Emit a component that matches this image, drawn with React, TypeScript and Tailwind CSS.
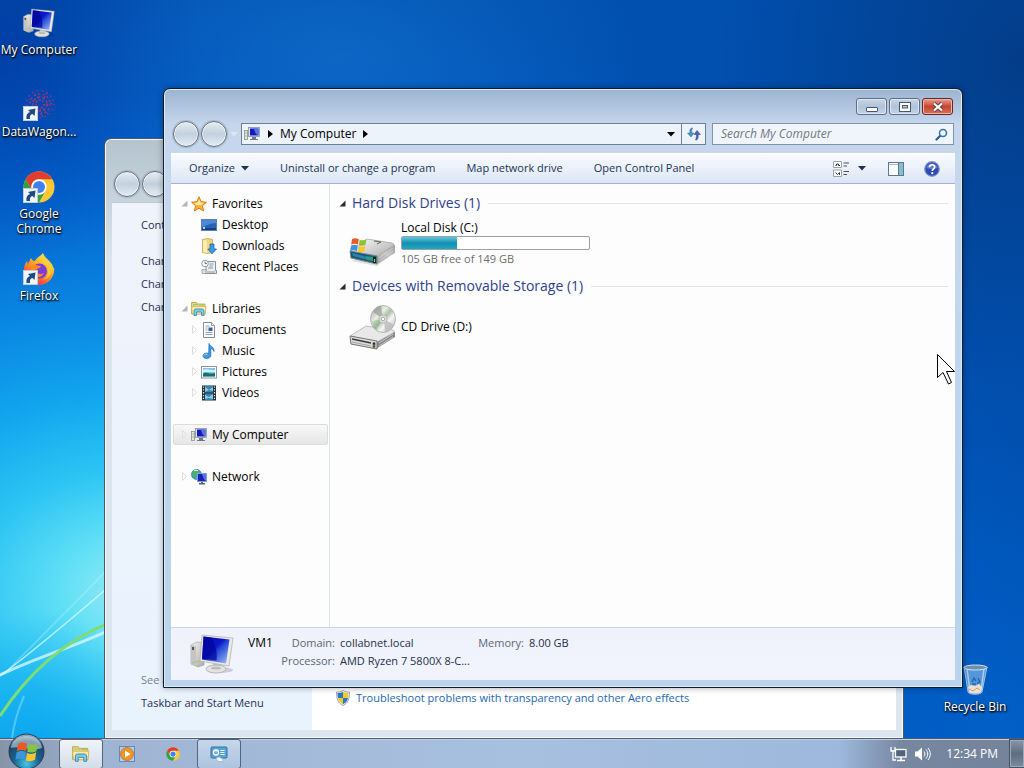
import type { ReactNode } from 'react';

function MonitorIcon({ className }: { className?: string }) {
  return (
    <svg viewBox="0 0 44 40" className={className} aria-hidden="true">
      <defs>
        <linearGradient id="screen" x1="0" y1="0" x2="1" y2="1">
          <stop offset="0" stopColor="#0508b8" />
          <stop offset="0.45" stopColor="#0d18c8" />
          <stop offset="0.55" stopColor="#2546d8" />
          <stop offset="1" stopColor="#a9c6fa" />
        </linearGradient>
        <linearGradient id="metal" x1="0" y1="0" x2="1" y2="1">
          <stop offset="0" stopColor="#f6f6f4" />
          <stop offset="1" stopColor="#aaaaa8" />
        </linearGradient>
      </defs>
      <ellipse cx="30" cy="36" rx="13" ry="3" fill="#000" opacity="0.15" />
      <path d="M1 11 7 8 14 9v22l-6 2-7-3z" fill="url(#metal)" stroke="#a5a5a0" strokeWidth="0.7" />
      <path d="M1 11l5 1v20l-5-2z" fill="#c4c4c0" />
      <path d="M3 13v3" stroke="#333" strokeWidth="1.5" />
      <path d="M2 29l11-3" stroke="#b9bd85" />
      <path d="M23 28l8 1 1 6h-9z" fill="#c5c5c2" />
      <ellipse cx="26" cy="35" rx="10" ry="4" fill="#e3e3df" stroke="#aaa" strokeWidth="0.8" />
      <ellipse cx="26" cy="34" rx="5" ry="1.6" fill="#bcbcb8" />
      <path d="M12 1l31 3-4 28-29-5z" fill="#eceae6" stroke="#b4b4ae" strokeWidth="0.8" />
      <path d="M13.500 2.500l26 3-3.500 24-24-4z" fill="url(#screen)" />
      <path d="M13.500 2.500l8 1c4 7 6 15 5 23l-14.500-2z" fill="#000598" opacity="0.7" />
    </svg>
  );
}

function SmallComputer({ className = 'h-4 w-4 shrink-0' }: { className?: string }) {
  return (
    <svg viewBox="0 0 16 16" className={className} aria-hidden="true">
      <rect x="0.5" y="4.5" width="3" height="9" fill="#e4e8dc" stroke="#85928b" strokeWidth="0.8" />
      <path d="M1.5 7h1M1.5 10h1" stroke="#54a05c" />
      <rect x="4.5" y="1.5" width="11" height="9" fill="#dfe3f2" stroke="#8890a8" strokeWidth="0.8" />
      <rect x="6" y="2.5" width="8.5" height="7" fill="#1717bb" />
      <path d="M10 2.5h4.5v7c-3-1-4-4-4.500-7z" fill="#5772e2" />
      <path d="M8 11h4v2h2v1H6v-1h2z" fill="#727787" />
    </svg>
  );
}

function StarIcon() {
  return (
    <svg viewBox="0 0 16 16" className="h-4 w-4 shrink-0" aria-hidden="true">
      <path d="M8 .8l2.100 4.900 5.300.5-4 3.500 1.200 5.300L8 12.200 3.400 15l1.200-5.300-4-3.500 5.300-.5z" fill="#fdb436" stroke="#d77a1b" />
      <path d="M8 3l1.400 3.500 3.500.4L10 9H5L3.200 6.900l3.400-.4z" fill="#ffe79c" />
    </svg>
  );
}

function DesktopIcon() {
  return (
    <svg viewBox="0 0 16 16" className="h-4 w-4 shrink-0" aria-hidden="true">
      <rect x="0.5" y="2.500" width="15" height="11" fill="#2962b8" stroke="#5e7fa8" />
      <path d="M1 3h14v3C9 6 5 9 1 10z" fill="#4d89d9" />
      <path d="M1 11h14v2H1z" fill="#183f7c" />
      <path d="M2 10h2v2H2z" fill="#b7d7f5" />
    </svg>
  );
}

function DownloadsIcon() {
  return (
    <svg viewBox="0 0 16 16" className="h-4 w-4 shrink-0" aria-hidden="true">
      <path d="M1.500 1.500l5-1 5 1v13l-5 1-5-1z" fill="#f3d67a" stroke="#c9a34a" strokeWidth="0.8" />
      <path d="M6 2.500v12.500l-4-1v-12z" fill="#fbeeb4" />
      <path d="M9 6h4v5h2.500L11 15.800 6.800 11H9z" fill="#3d9ae4" stroke="#1766ae" strokeWidth="0.8" />
    </svg>
  );
}

function RecentIcon() {
  return (
    <svg viewBox="0 0 16 16" className="h-4 w-4 shrink-0" aria-hidden="true">
      <path d="M5 2.500h9.500v9h1v3H4v-2h1z" fill="#eceff1" stroke="#7d878d" strokeWidth="0.9" />
      <path d="M8.500 5h4M8.500 7h3M7 9h5M6 13h8" stroke="#8c979d" />
      <circle cx="4" cy="4.500" r="3.300" fill="#f7f9fa" stroke="#87939b" strokeWidth="0.9" />
      <path d="M4 2.500v2h2" stroke="#55616a" fill="none" strokeWidth="0.8" />
      <path d="M1 10.500h4v4H1z" fill="#dce1e4" stroke="#8b949a" strokeWidth="0.7" />
    </svg>
  );
}

function LibraryIcon({ className = 'h-4 w-4 shrink-0' }: { className?: string }) {
  return (
    <svg viewBox="0 0 16 16" className={className} aria-hidden="true">
      <path d="M.5 1.500h5l1 1.500h7.500v10H.5z" fill="#eed675" stroke="#bda04a" strokeWidth="0.8" />
      <path d="M2 3.500h5M8 4h5" stroke="#8fc78b" />
      <path d="M.5 5.500h14.500l-.8 7.500H1.300z" fill="#faedaa" stroke="#cfb45c" strokeWidth="0.8" />
      <path d="M3 14.500V9.800C3 8.600 4 8 5 8h6c1 0 2 .6 2 1.800v4.700h-2.500v-3.500h-5v3.500z" fill="#7fcbe8" stroke="#3585ad" strokeWidth="0.8" />
    </svg>
  );
}

function DocumentIcon() {
  return (
    <svg viewBox="0 0 16 16" className="h-4 w-4 shrink-0" aria-hidden="true">
      <path d="M2.500.5h8l3 3v12h-11z" fill="#fff" stroke="#7f8b99" />
      <path d="M10.500.5v3h3" fill="#dfe6ec" stroke="#7f8b99" strokeWidth="0.8" />
      <path d="M4.500 4h4M4.500 6h2M4.500 8h2M4.500 10.500h7M4.500 12.500h7" stroke="#8c9bb0" />
      <path d="M7.500 5.500h4V9h-4z" fill="#315f9f" />
    </svg>
  );
}

function MusicIcon() {
  return (
    <svg viewBox="0 0 16 16" className="h-4 w-4 shrink-0" aria-hidden="true">
      <path d="M8 .5c.5 3 5.500 3 5 8-.8-2-2-2.800-3.200-3v7.200c0 1.600-2 2.800-4.200 2.800S2 14.300 2 12.800s1.600-2.700 3.600-2.700c.8 0 1.500.1 2.100.4z" fill="#3b9be2" stroke="#1b66ae" strokeWidth="0.7" />
      <path d="M3 12.500c.5-1.300 2-1.600 3.500-1.200" stroke="#b9e3fb" fill="none" />
    </svg>
  );
}

function PictureIcon() {
  return (
    <svg viewBox="0 0 16 16" className="h-4 w-4 shrink-0" aria-hidden="true">
      <rect x="0.500" y="2.500" width="15" height="11.500" fill="#fff" stroke="#8798a5" />
      <path d="M2 4h12v8.500H2z" fill="#7fc7e9" />
      <path d="M2 6c4-2 8 1 12 0v2H2z" fill="#d7f1f8" />
      <path d="M2 10c3-3 6 1 12-1v3.500H2z" fill="#15706f" />
    </svg>
  );
}

function VideoIcon() {
  return (
    <svg viewBox="0 0 16 16" className="h-4 w-4 shrink-0" aria-hidden="true">
      <rect x="1" y="0.500" width="14" height="15" fill="#222c35" />
      <path d="M4 1h8v6.500H4zM4 8.500h8V15H4z" fill="#3a83ad" />
      <path d="M4 2l4 3 4-3v4L8 5 4 7zM4 10l4 2 4-3v5l-4-1-4 1z" fill="#8acbe5" />
      <path d="M2.500 1.500v14M13.500 1.500v14" stroke="#e7edf0" strokeWidth="1.200" strokeDasharray="1.300 1.500" />
    </svg>
  );
}

function NetworkIcon() {
  return (
    <svg viewBox="0 0 16 16" className="h-4 w-4 shrink-0" aria-hidden="true">
      <circle cx="5.500" cy="5.500" r="5" fill="#3ba3d5" stroke="#2678a0" strokeWidth="0.7" />
      <path d="M2 3c2-3 6-2 6 0S6 5 5 6s1 3-1 3-3-3-2-6z" fill="#48b263" />
      <path d="M3 2c1-1 3-1 4 0" stroke="#e9fbef" fill="none" />
      <rect x="6.500" y="4.500" width="9" height="8" fill="#1a1fbd" stroke="#8ba0cc" />
      <path d="M11 5h4v7c-2-1-3-4-4-7z" fill="#5474e4" />
      <path d="M10 13h2v1h2v1.500H8V14h2z" fill="#596072" />
    </svg>
  );
}

function Flag() {
  return (
    <g>
      <path d="M0 1.500C3 0 5 0 8 1.500L7 8C4.500 6.500 2 6.500-1 8z" fill="#ea5a25" />
      <path d="M9 2c3 1 5 1 8-.5L16 8c-3 1.500-5 1.500-8 .5z" fill="#88c53d" />
      <path d="M-1.200 9c3-1.500 5.500-1.500 8 0l-1 6.500c-2.500-1.500-5-1.500-8 0z" fill="#3d96dd" />
      <path d="M7.800 9.500c3 1.200 5 1.200 8-.5l-1 6.500c-3 1.500-5 1.500-8 .5z" fill="#fbc62c" />
    </g>
  );
}

function HardDriveIcon() {
  return (
    <svg viewBox="0 0 48 48" className="h-12 w-12 shrink-0" aria-hidden="true">
      <defs>
        <linearGradient id="hddTop" x1="0" y1="0" x2="1" y2="0.800">
          <stop offset="0" stopColor="#fff" />
          <stop offset="1" stopColor="#b4b4b4" />
        </linearGradient>
        <linearGradient id="hddSide" x1="0" y1="1" x2="1" y2="0">
          <stop offset="0" stopColor="#6e6e6e" />
          <stop offset="0.600" stopColor="#c4c4c4" />
          <stop offset="1" stopColor="#8b8b8b" />
        </linearGradient>
      </defs>
      <path d="M3 41l26 5 17-13v-6z" fill="#000" opacity="0.12" />
      <path d="M2 32l17-13 25 4c2 .5 3 2 3 4v6L29 44 3 38z" fill="url(#hddSide)" />
      <path d="M2 31l17-12 25 4c2 1 2 2 1 3L29 36z" fill="url(#hddTop)" stroke="#aaa" strokeWidth="0.7" />
      <path d="M2 31l27 5v8L3 38z" fill="#17567a" stroke="#7c8588" />
      <path d="M4 33l12 3 4 4-15-4z" fill="#2a86a8" />
      <path d="M17 36l8 1v4l-6-1z" fill="#2e9a80" />
      <path d="M31 38l14-10M31 41l14-10" stroke="#dadada" opacity="0.700" />
      <path d="M26.500 37v6" stroke="#122" strokeWidth="3" />
      <path d="M26.500 39v3" stroke="#6fe63c" strokeWidth="1.300" />
      <path d="M26 21l7 1-4 2" stroke="#666" fill="none" />
      <g transform="translate(4 18) scale(.85)">
        <Flag />
      </g>
    </svg>
  );
}

function CdDriveIcon() {
  return (
    <svg viewBox="0 0 48 48" className="h-12 w-12 shrink-0" aria-hidden="true">
      <defs>
        <linearGradient id="disc" x1="0" y1="0" x2="1" y2="1">
          <stop offset="0" stopColor="#9c9c9c" />
          <stop offset="0.35" stopColor="#e9efe4" />
          <stop offset="0.5" stopColor="#a9bfa4" />
          <stop offset="0.65" stopColor="#f7f7f7" />
          <stop offset="1" stopColor="#a2a2a2" />
        </linearGradient>
      </defs>
      <path d="M2 34l16-10 26 3c2 .5 3 2 3 3v4L28 46 3 41z" fill="#8b8b8b" />
      <path d="M2 33l16-10 27 4c2 1 1 2 0 3L29 39z" fill="#e8e8e8" stroke="#aaa" strokeWidth="0.7" />
      <path d="M2 33l27 5v8L3 41z" fill="#dcdcdc" stroke="#777" />
      <path d="M4 36l19 4" stroke="#383838" strokeWidth="1.500" />
      <path d="M4 39l19 4" stroke="#a3a3a3" />
      <path d="M31 40l14-9M31 43l14-9" stroke="#c5c5c5" />
      <path d="M26 39.500v5" stroke="#222" strokeWidth="2.500" />
      <path d="M26 41.500v2" stroke="#a5dc39" />
      <ellipse cx="35" cy="16" rx="12.500" ry="13.500" fill="url(#disc)" stroke="#aaa" strokeWidth="0.8" />
      <path d="M35 16L25 9c2-4 5-6 8-6z" fill="#8e978e" opacity="0.65" />
      <path d="M36 16l10 6c-2 4-5 7-9 7z" fill="#bcbcbc" opacity="0.8" />
      <path d="M35 16L24 18c0 4 2 7 4 9z" fill="#7fb07c" opacity="0.4" />
      <circle cx="35" cy="16" r="4" fill="#e3e3e3" stroke="#aaa" strokeWidth="0.7" />
      <circle cx="35" cy="16" r="1.800" fill="#fff" stroke="#888" strokeWidth="0.7" />
    </svg>
  );
}

function ChromeIcon({ className }: { className?: string }) {
  return (
    <svg viewBox="0 0 32 32" className={className} aria-hidden="true">
      <circle cx="16" cy="16" r="15.500" fill="#fcc934" />
      <path d="M2.600 8.200A15.500 15.500 0 0 1 29.400 8.300H16a7.700 7.700 0 0 0-6.700 11.600z" fill="#e33b2e" />
      <path d="M2.600 8.200a15.500 15.500 0 0 0 13.300 23.300l6.800-11.700a7.700 7.700 0 0 1-13.400 0z" fill="#2da14c" />
      <circle cx="16" cy="16" r="7.700" fill="#fff" />
      <circle cx="16" cy="16" r="6" fill="#3f82ee" />
    </svg>
  );
}

function FirefoxIcon() {
  return (
    <svg viewBox="0 0 32 32" className="h-8 w-8" aria-hidden="true">
      <defs>
        <linearGradient id="flame" x1="0.800" y1="0" x2="0.200" y2="1">
          <stop offset="0" stopColor="#fff44f" />
          <stop offset="0.400" stopColor="#ffae27" />
          <stop offset="0.750" stopColor="#ff5a36" />
          <stop offset="1" stopColor="#e31587" />
        </linearGradient>
      </defs>
      <path d="M20 0c1 4 5 6 8 10 1.300 1.500 2 3 2.200 4.500l1 .5c.8 9-6 17-15 17S1 25 1 17c0-4 1-7 3-9l1 3 3-6c1 2 2 3 4 3 2-4 5-4 8-8z" fill="url(#flame)" />
      <circle cx="16.500" cy="18" r="7.500" fill="#7a3bd8" />
      <path d="M9 12c4-1 6 1 9 1-1 3-5 2-5 5 1 3 5 4 8 2-2 5-9 6-12 1-1.500-3-1.500-6 0-9z" fill="#ff8a1e" />
      <path d="M18 5c1 5 7 7 7 14 0 4-3 7-6 8 7-1 11-6 10-12C28 10 21 8 20 1z" fill="#ffcf3a" opacity="0.850" />
    </svg>
  );
}

function SwirlIcon() {
  return (
    <svg viewBox="0 0 32 32" className="h-8 w-8" fill="none" aria-hidden="true">
      <g stroke="#8a3a86" strokeWidth="1.500" strokeDasharray="2 1.500">
        <circle cx="17" cy="15" r="4" />
        <circle cx="17" cy="15" r="7" strokeDasharray="3 2" />
        <circle cx="17" cy="15" r="10" strokeDasharray="2 2.500" />
        <circle cx="17" cy="15" r="13.500" strokeDasharray="1.500 3.500" stroke="#7a3f8f" />
      </g>
      <path d="M12 5l5 7M24 4l-5 8M29 14l-8 2M25 25l-6-7M6 10l7 4M20 28l-3-8" stroke="#b4395f" strokeDasharray="2 1.500" />
    </svg>
  );
}

function BinIcon() {
  return (
    <svg viewBox="0 0 32 32" className="h-8 w-8" aria-hidden="true">
      <path d="M5 3l4 25c1 3 13 3 14 0l5-25z" fill="#8fbde8" fillOpacity="0.600" stroke="#b9d7ef" strokeWidth="0.800" />
      <path d="M8 5l3 22M25 5l-3 22" stroke="#e8f5ff" strokeWidth="1.500" opacity="0.600" />
      <path d="M9 23l3-2 4 1 4-2 3 3-1 5c-2 2-10 2-12 0z" fill="#efdfd2" />
      <path d="M10 25l4 2 4-3 3 2" stroke="#d59b70" fill="none" />
      <ellipse cx="16.500" cy="3.500" rx="11.500" ry="2.500" fill="#6f90ab" stroke="#d2e5f2" />
      <path d="M13 18l2-4 2 3M19 14l2 4-3 1M13 20h4" stroke="#2469b4" strokeWidth="1.500" fill="none" />
    </svg>
  );
}

function ShortcutArrow() {
  return (
    <svg viewBox="0 0 15 15" className="absolute bottom-0 left-0 h-[15px] w-[15px]" aria-hidden="true">
      <rect x="0.500" y="0.500" width="14" height="14" fill="#f2f5f8" stroke="#c2ccd6" />
      <path d="M3.500 13C3 9.500 4 7 7 6L5 4l7.500-1.500L11.500 10l-2-2c-2 .5-3 2-2.500 5z" fill="#1d4b82" />
    </svg>
  );
}

function ShieldIcon() {
  return (
    <svg viewBox="0 0 16 16" className="h-4 w-4" aria-hidden="true">
      <path d="M8 .5c2 1.200 4.500 1.700 6.500 1.500 0 6-1 11-6.500 13.500C2.500 13 1.500 8 1.500 2 3.500 2.200 6 1.700 8 .5z" fill="#eef2f5" stroke="#8997a5" strokeWidth="0.800" />
      <path d="M8 2v6H3c-.3-1.500-.5-3-.5-5C4.500 3 6.500 2.800 8 2z" fill="#2f78bd" />
      <path d="M8 2v6h5c.3-1.500.5-3 .5-5C11.500 3 9.500 2.800 8 2z" fill="#f5c92e" />
      <path d="M3 8h5v6.300C5 12.800 3.700 11 3 8z" fill="#f5c92e" />
      <path d="M13 8H8v6.300c3-1.500 4.300-3.300 5-6.300z" fill="#2f78bd" />
    </svg>
  );
}

function CaretDown({ className }: { className?: string }) {
  return (
    <svg viewBox="0 0 8 5" className={`h-[5px] w-2 ${className ?? ''}`} aria-hidden="true">
      <path d="M0 0h8L4 4.500z" fill="currentColor" />
    </svg>
  );
}

function CaretRight() {
  return (
    <svg viewBox="0 0 5 8" className="h-2 w-[5px]" aria-hidden="true">
      <path d="M0 0v8l5-4z" fill="#000" />
    </svg>
  );
}

function Expanded({ className }: { className: string }) {
  return (
    <svg viewBox="0 0 7 7" className={`h-[7px] w-[7px] shrink-0 ${className}`} aria-hidden="true">
      <path d="M6.500.5v6h-6z" fill="currentColor" />
    </svg>
  );
}

function Collapsed() {
  return (
    <svg viewBox="0 0 6 9" className="h-[9px] w-[6px] shrink-0" aria-hidden="true">
      <path d="M.5.5v8l4-4z" fill="none" stroke="#dedede" />
    </svg>
  );
}

function NavButtons() {
  const circle =
    'h-[26px] w-[26px] rounded-full border border-[#66727f] bg-linear-to-b from-[#e6ecf1] via-[#c3d1de] to-[#e3ecf4] shadow-[inset_0_0_0_1px_#eef3f8,0_0_1px_1px_#a7b6c6]';
  return (
    <div className="flex shrink-0 gap-[2px]">
      <button aria-label="Back" className={circle} />
      <button aria-label="Forward" className={circle} />
    </div>
  );
}

type ShortcutProps = { label: string; arrow?: boolean; children: ReactNode };

function Shortcut({ label, arrow, children }: ShortcutProps) {
  return (
    <button className="flex w-[78px] flex-col items-center text-center text-xs leading-[15px] text-white [text-shadow:1px_1px_2px_#000,0_1px_2px_#000]">
      <span className="relative mb-[3px] block h-8 w-8">
        {children}
        {arrow && <ShortcutArrow />}
      </span>
      {label}
    </button>
  );
}

type TreeRowProps = {
  label: string;
  icon: ReactNode;
  state?: 'open' | 'closed';
  nested?: boolean;
  selected?: boolean;
};

function TreeRow({ label, icon, state, nested, selected }: TreeRowProps) {
  return (
    <li>
      <button
        className={`flex h-[21px] w-full items-center gap-[3px] rounded-[2px] border text-left ${nested ? 'pl-[17px]' : 'pl-[7px]'} ${
          selected ? 'border-[#dcdcdc] bg-linear-to-b from-[#f8f8f8] to-[#e6e6e6]' : 'border-transparent'
        }`}
      >
        <span className="flex w-[7px] shrink-0 justify-center">
          {state === 'open' && <Expanded className="text-[#b5b5b5]" />}
          {state === 'closed' && <Collapsed />}
        </span>
        <span className="flex items-center gap-[5px]">
          {icon}
          {label}
        </span>
      </button>
    </li>
  );
}

function GroupHeading({ children }: { children: ReactNode }) {
  return (
    <div className="flex h-[22px] items-center">
      <Expanded className="mr-[6px] text-[#2b2b2b]" />
      <h2 className="text-sm text-[#2f3f8b]">{children}</h2>
      <span className="ml-2 h-px flex-1 bg-[#e2e4e8]" />
    </div>
  );
}

function BackWindow() {
  return (
    <section
      aria-label="Personalization"
      className="absolute top-[138px] right-[120px] bottom-0 left-[104px] flex flex-col rounded-t-[7px] border border-b-0 border-[#46586a] bg-linear-to-b from-[#b4c3cd] via-[#dae4ec] via-20% to-[#dbe6ef] px-[7px] pb-2 shadow-[inset_0_0_0_1px_#f4f8fa]"
    >
      <div className="flex h-[63px] items-end pb-[5px] pl-[2px]">
        <NavButtons />
      </div>
      <div className="flex min-h-0 flex-1 border-t border-[#bcc9d4]">
        <nav className="flex w-[200px] shrink-0 flex-col bg-linear-to-b from-[#eff3fb] to-[#e9f3fe] pt-[13px] pb-4 pl-[29px] text-[11px] text-[#1e3056]">
          <a href="#home" className="mb-[15px] leading-[18px] whitespace-nowrap">Control Panel Home</a>
          <a href="#icons" className="leading-[23px] whitespace-nowrap">Change desktop icons</a>
          <a href="#pointers" className="leading-[23px] whitespace-nowrap">Change mouse pointers</a>
          <a href="#account" className="leading-[23px] whitespace-nowrap">Change your account picture</a>
          <p className="mt-auto leading-[23px] text-[#75818f]">See also</p>
          <a href="#taskbar" className="leading-[23px] whitespace-nowrap">Taskbar and Start Menu</a>
        </nav>
        <div className="flex flex-1 flex-col justify-end bg-white pb-6 pl-[23px]">
          <a href="#troubleshoot" className="flex items-center gap-[5px] text-[11px] text-[#1b68b3]">
            <ShieldIcon />
            Troubleshoot problems with transparency and other Aero effects
          </a>
        </div>
      </div>
    </section>
  );
}

function TitleButtons() {
  const plain =
    'flex h-[17px] w-[31px] items-center justify-center rounded-[3px] border border-[#5c6f87] bg-linear-to-b from-[#c9d6e6] via-[#b2c3d8] to-[#c3d3e6] shadow-[inset_0_0_0_1px_#dfe8f3]';
  return (
    <div className="flex justify-end gap-[2px] pt-[9px] pr-[2px]">
      <button aria-label="Minimize" className={plain}>
        <svg viewBox="0 0 12 12" className="h-3 w-3"><rect x="0.500" y="6.500" width="11" height="4" rx="0.500" fill="#fff" stroke="#485a70" /></svg>
      </button>
      <button aria-label="Maximize" className={plain}>
        <svg viewBox="0 0 12 12" className="h-3 w-3">
          <rect x="0.500" y="1.500" width="11" height="9" fill="#fff" stroke="#485a70" />
          <rect x="3.500" y="4.500" width="5" height="2.500" fill="#b8c8da" stroke="#485a70" />
        </svg>
      </button>
      <button
        aria-label="Close"
        className="flex h-[17px] w-[31px] items-center justify-center rounded-[3px] border border-[#6b2325] bg-linear-to-b from-[#e0a096] via-[#c8432f] to-[#d5705a] shadow-[inset_0_0_0_1px_#eeb5a8]"
      >
        <svg viewBox="0 0 12 10" className="h-[10px] w-3">
          <path d="M2 1.500l8 7M10 1.500l-8 7" stroke="#5d3a45" strokeWidth="3.800" />
          <path d="M2 1.500l8 7M10 1.500l-8 7" stroke="#fff" strokeWidth="2.200" />
        </svg>
      </button>
    </div>
  );
}

function AddressRow() {
  return (
    <div className="mt-[6px] flex h-[26px] items-center pr-[1px] pl-[2px]">
      <NavButtons />
      <CaretDown className="mx-[3px] shrink-0 text-[#dce7f2]" />
      <div className="flex h-[22px] min-w-0 flex-1 border border-[#6d7f95] bg-[#edf3fb]">
        <div className="flex min-w-0 flex-1 items-center pr-[6px] pl-[2px]">
          <SmallComputer />
          <span className="ml-2"><CaretRight /></span>
          <button className="mx-[7px] whitespace-nowrap">My Computer</button>
          <CaretRight />
          <button aria-label="Previous locations" className="ml-auto"><CaretDown /></button>
        </div>
        <button aria-label="Refresh" className="flex w-6 items-center justify-center border-l border-[#6d7f95]">
          <svg viewBox="0 0 16 14" className="h-[14px] w-4">
            <path d="M5.500 1C4 1.500 3.500 3.500 4 6H1.500l3.500 4L8 6H5.800c-.2-2 0-3.500.7-5z" fill="#4a90cc" stroke="#2b68a6" strokeWidth="0.500" />
            <path d="M10.500 13c1.500-.5 2-3 1.700-5.500h2.300L11 3.500 8 7.500h2.300c.2 2 0 4-.8 5.500z" fill="#4668a8" stroke="#2b4682" strokeWidth="0.500" />
          </svg>
        </button>
      </div>
      <form className="ml-[6px] flex h-[22px] w-[242px] items-center border border-[#8294aa] bg-[#f0f5fc] pr-[5px] pl-2" onSubmit={(e) => e.preventDefault()}>
        <input
          type="search"
          aria-label="Search My Computer"
          placeholder="Search My Computer"
          className="min-w-0 flex-1 bg-transparent italic outline-none placeholder:text-[#717984]"
        />
        <button aria-label="Search">
          <svg viewBox="0 0 13 13" className="h-[13px] w-[13px]">
            <path d="M1.500 11.500L6 7" stroke="#2b5d96" strokeWidth="2.200" strokeLinecap="round" />
            <circle cx="8" cy="5" r="3.500" fill="#f3faff" stroke="#3a74ae" strokeWidth="1.600" />
          </svg>
        </button>
      </form>
    </div>
  );
}

function CommandBar() {
  return (
    <div className="mt-[6px] flex h-[31px] items-center gap-[31px] border-t border-b border-t-white border-b-[#a4b3c9] bg-linear-to-b from-[#f8fbff] via-[#eaf1fb] to-[#dbe5f5] pr-[15px] pl-[18px] text-[11px] whitespace-nowrap text-[#1e3250]">
      <button className="flex items-center gap-[6px]">Organize <CaretDown /></button>
      <button>Uninstall or change a program</button>
      <button>Map network drive</button>
      <button>Open Control Panel</button>
      <div className="ml-auto flex items-center">
        <button aria-label="Change your view">
          <svg viewBox="0 0 17 16" className="h-4 w-[17px]">
            <path d="M.5.5h8v6h-8zM.5 9h8v6.500h-8z" fill="#fff" stroke="#9aa2ab" />
            <path d="M2.500 4.500h1V3h2v1.500h1.500M2.500 11.500l2 2 2-2v2.500" stroke="#333b44" fill="none" />
            <path d="M10.500 2H16M10.500 5H14M10.500 10.500H16M10.500 13.500H14" stroke="#48515b" />
          </svg>
        </button>
        <button aria-label="More options" className="ml-2"><CaretDown /></button>
        <button aria-label="Show the preview pane" className="ml-[22px]">
          <svg viewBox="0 0 16 14" className="h-[14px] w-4">
            <rect x="0.500" y="0.500" width="15" height="13" fill="#fff" stroke="#5b7890" />
            <path d="M1 2.500h9" stroke="#a9c1d4" />
            <path d="M10.500 1v12" stroke="#5b7890" />
            <rect x="11" y="1" width="4" height="12" fill="#82bfd0" />
          </svg>
        </button>
        <button aria-label="Get help" className="ml-5">
          <svg viewBox="0 0 16 16" className="h-4 w-4">
            <circle cx="8" cy="8" r="7.300" fill="#2d4bb5" stroke="#8b99bf" strokeWidth="1.200" />
            <path d="M2.500 7C3 1 13 1 13.500 7 10 8.500 6 8.500 2.500 7z" fill="#7f9be4" opacity="0.600" />
            <path d="M5.500 6.200C5.500 3 10.700 3 10.700 6c0 2-2.400 1.800-2.400 4" stroke="#fff" strokeWidth="1.700" fill="none" />
            <circle cx="8.300" cy="12.200" r="1.100" fill="#fff" />
          </svg>
        </button>
      </div>
    </div>
  );
}

function Sidebar() {
  return (
    <nav aria-label="Folders" className="flex w-[159px] shrink-0 flex-col gap-[21px] border-r border-[#dbe4f0] pt-[9px] pr-px pl-[2px]">
      <ul>
        <TreeRow label="Favorites" icon={<StarIcon />} state="open" />
        <TreeRow label="Desktop" icon={<DesktopIcon />} nested />
        <TreeRow label="Downloads" icon={<DownloadsIcon />} nested />
        <TreeRow label="Recent Places" icon={<RecentIcon />} nested />
      </ul>
      <ul>
        <TreeRow label="Libraries" icon={<LibraryIcon />} state="open" />
        <TreeRow label="Documents" icon={<DocumentIcon />} state="closed" nested />
        <TreeRow label="Music" icon={<MusicIcon />} state="closed" nested />
        <TreeRow label="Pictures" icon={<PictureIcon />} state="closed" nested />
        <TreeRow label="Videos" icon={<VideoIcon />} state="closed" nested />
      </ul>
      <ul>
        <TreeRow label="My Computer" icon={<SmallComputer />} state="closed" selected />
      </ul>
      <ul>
        <TreeRow label="Network" icon={<NetworkIcon />} state="closed" />
      </ul>
    </nav>
  );
}

function Drives() {
  const total = 149;
  const free = 105;
  const used = ((total - free) / total) * 100;

  return (
    <main className="min-w-0 flex-1 pt-2 pr-[7px] pl-[9px]">
      <GroupHeading>Hard Disk Drives (1)</GroupHeading>
      <div className="mt-[6px] mb-[7px] flex items-start gap-[5px] pl-[9px]">
        <HardDriveIcon />
        <div className="w-[189px] leading-4">
          <p>Local Disk (C:)</p>
          <div className="h-[14px] rounded-[2px] border border-[#a0a0a0] bg-white">
            <div
              className="h-full bg-linear-to-b from-[#5bcbe2] via-[#128fb0] to-[#20a6c5]"
              style={{ width: `${used}%` }}
            />
          </div>
          <p className="mt-px text-[11px] text-[#6d6d6d]">{free} GB free of {total} GB</p>
        </div>
      </div>
      <GroupHeading>Devices with Removable Storage (1)</GroupHeading>
      <div className="mt-[6px] flex items-center gap-[5px] pl-[9px]">
        <CdDriveIcon />
        <p>CD Drive (D:)</p>
      </div>
    </main>
  );
}

function DetailsPane() {
  return (
    <footer className="flex h-[53px] items-start border-t border-[#cdd5e2] bg-linear-to-b from-[#eff2fa] to-[#f1f4fd] pt-[6px] pl-[19px]">
      <MonitorIcon className="h-10 w-11 shrink-0" />
      <p className="ml-[14px] w-7 leading-[18px] text-black">VM1</p>
      <dl className="grid grid-cols-[59px_132px_47px_auto] gap-x-[5px] text-[11px] leading-[18px] whitespace-nowrap text-[#1e2f4c] [&_dt]:text-right [&_dt]:text-[#5a6779]">
        <dt>Domain:</dt>
        <dd>collabnet.local</dd>
        <dt>Memory:</dt>
        <dd>8.00 GB</dd>
        <dt>Processor:</dt>
        <dd>AMD Ryzen 7 5800X 8-C...</dd>
      </dl>
    </footer>
  );
}

function ExplorerWindow() {
  return (
    <section
      aria-label="My Computer"
      className="absolute top-[88px] right-[61px] bottom-[50px] left-[163px] flex flex-col rounded-t-[7px] border border-[#0e1d2e] bg-linear-to-b from-[#9cb4cf] via-[#c6d7ed] via-6% to-[#b9d3ee] px-[7px] pb-[7px] text-black shadow-[inset_0_0_0_1px_#dcecf8,0_0_6px_rgba(0,0,0,0.35)]"
    >
      <TitleButtons />
      <AddressRow />
      <CommandBar />
      <div className="flex min-h-0 flex-1 bg-[#fdfdfe]">
        <Sidebar />
        <Drives />
      </div>
      <DetailsPane />
    </section>
  );
}

function Wallpaper() {
  return (
    <>
      <div className="absolute inset-0 bg-[radial-gradient(ellipse_900px_620px_at_150px_590px,#a5eff3_0%,#5fdff6_10%,#2cc4f3_20%,#12a5ee_32%,#0a88e2_45%,#0468d2_62%,#0155bd_80%,#0150b0_100%)]" />
      <div className="absolute inset-0 bg-[radial-gradient(ellipse_300px_200px_at_340px_60px,rgba(20,115,205,0.6),transparent),radial-gradient(ellipse_320px_360px_at_1024px_60px,rgba(5,45,105,0.55),transparent),radial-gradient(ellipse_200px_240px_at_0_40px,rgba(0,45,150,0.5),transparent),radial-gradient(ellipse_300px_300px_at_1000px_740px,rgba(0,110,220,0.5),transparent),radial-gradient(ellipse_110px_130px_at_40px_740px,rgba(0,160,240,0.6),transparent)]" />
      <svg viewBox="0 0 105 180" className="absolute bottom-0 left-0 h-[180px] w-[105px]" fill="none" aria-hidden="true">
        <path d="M0 118C35 92 70 62 105 32" stroke="#d5fbff" strokeWidth="1.500" opacity="0.750" />
        <path d="M8 112C45 75 75 45 105 14" stroke="#c7f6ff" strokeWidth="1.500" opacity="0.350" />
        <path d="M0 117C35 100 70 90 105 74" stroke="#dcfaff" strokeWidth="3" opacity="0.750" />
        <path d="M12 180c2-15 6-28 12-42" stroke="#8ee4ff" strokeWidth="2" opacity="0.500" />
        <path d="M0 158C28 115 65 83 105 67" stroke="#7ddc74" strokeWidth="3" />
      </svg>
    </>
  );
}

function Taskbar() {
  const open =
    'flex h-[30px] w-11 items-center justify-center rounded-[3px] border border-[#53667f]';
  return (
    <nav
      aria-label="Taskbar"
      className="relative flex h-[30px] shrink-0 items-center border-t border-[#4b5c72] bg-[linear-gradient(90deg,#8694a8_0,#9fb4d2_10%,#a8c0e0_50%,#9db8dc_82%,#7787a0_88%,#74839a_100%)] shadow-[inset_0_1px_0_#c3d1e3]"
    >
      <button aria-label="Start" className="mr-[14px] mb-1 ml-2 h-[37px] w-[37px] shrink-0">
        <svg viewBox="0 0 37 37" className="h-[37px] w-[37px]">
          <defs>
            <radialGradient id="orb" cx="0.500" cy="0.850" r="0.800">
              <stop offset="0" stopColor="#46c5ea" />
              <stop offset="0.450" stopColor="#19648e" />
              <stop offset="0.800" stopColor="#1d4668" />
              <stop offset="1" stopColor="#8ea3b8" />
            </radialGradient>
          </defs>
          <circle cx="18.500" cy="18.500" r="17.500" fill="url(#orb)" stroke="#263d55" />
          <path d="M3 15C5-1 32-1 34 15 24 19 13 12 3 15z" fill="#d9e7f1" opacity="0.550" />
          <g transform="translate(10 9) scale(1.150)">
            <Flag />
          </g>
        </svg>
      </button>
      <div className="flex gap-[2px]">
        <button aria-label="Windows Explorer" className={`${open} bg-linear-to-b from-[#f0f4f8] to-[#d3dde9]`}>
          <LibraryIcon className="h-[18px] w-[18px]" />
        </button>
        <button aria-label="Media Player" className="flex h-[30px] w-11 items-center justify-center">
          <svg viewBox="0 0 16 16" className="h-4 w-4">
            <rect x="0.500" y="0.500" width="15" height="15" fill="#b4cdec" stroke="#5c8cc0" />
            <circle cx="8" cy="8" r="6.500" fill="#ef9528" stroke="#cc6f14" strokeWidth="0.800" />
            <path d="M6 4.500v7L11.500 8z" fill="#fff" />
          </svg>
        </button>
        <button aria-label="Google Chrome" className="flex h-[30px] w-11 items-center justify-center">
          <ChromeIcon className="h-[14px] w-[14px]" />
        </button>
        <button aria-label="Personalization" className={`${open} bg-linear-to-b from-[#c7d7eb] to-[#acc3e0]`}>
          <svg viewBox="0 0 18 16" className="h-4 w-[18px]">
            <rect x="1" y="1" width="16" height="11" rx="1" fill="#5ba5d2" stroke="#2f73a1" />
            <circle cx="6" cy="6.500" r="2.500" fill="none" stroke="#fff" strokeWidth="1.300" />
            <path d="M6 6.500V3.500M10.500 4.500h4M10.500 6.500h4M10.500 8.500h4" stroke="#e8f6ff" />
            <path d="M6 12l3-1 4 2v2.500H8z" fill="#f4f9fd" stroke="#8eb3cf" strokeWidth="0.700" />
          </svg>
        </button>
      </div>
      <div className="ml-auto flex h-full shrink-0 items-center text-white">
        <svg viewBox="0 0 17 16" className="h-4 w-[17px]" aria-label="Network status">
          <path d="M1 1v4h4V1M3 5v9h3" stroke="#fff" strokeWidth="1.300" fill="none" />
          <rect x="5.500" y="3.500" width="10.500" height="7.500" fill="#52637a" stroke="#fff" strokeWidth="1.300" />
          <path d="M7 14.500h8M11 11v3" stroke="#fff" strokeWidth="1.500" />
        </svg>
        <svg viewBox="0 0 17 16" className="ml-[7px] h-4 w-[17px]" aria-label="Volume">
          <path d="M1 5.500h2.500L8 1.500v13l-4.500-4H1z" fill="#fff" />
          <path d="M10 5.500c1.200 1.500 1.200 3.500 0 5M12 3.500c2.300 2.700 2.300 6.300 0 9M14 2c3 3.700 3 8.300 0 12" stroke="#fff" fill="none" />
        </svg>
        <time className="mr-[11px] ml-[15px]">12:34 PM</time>
        <button aria-label="Show desktop" className="h-full w-[15px] border border-r-0 border-[#43536a] bg-linear-to-b from-[#8897aa] via-[#5f6d80] to-[#7b8a9e] shadow-[inset_0_0_0_1px_#9ba9ba]" />
      </div>
    </nav>
  );
}

export default function App() {
  return (
    <div className="flex h-screen min-h-[600px] flex-col overflow-hidden font-['Open_Sans','Noto_Sans',sans-serif] text-xs">
      <div className="relative min-h-0 flex-1">
        <Wallpaper />
        <div className="absolute top-[7px] left-0 grid auto-rows-[82px]">
          <Shortcut label="My Computer"><MonitorIcon className="h-8 w-8" /></Shortcut>
          <Shortcut label="DataWagon..." arrow><SwirlIcon /></Shortcut>
          <Shortcut label="Google Chrome" arrow><ChromeIcon className="h-8 w-8" /></Shortcut>
          <Shortcut label="Firefox" arrow><FirefoxIcon /></Shortcut>
        </div>
        <div className="absolute right-[10px] bottom-6">
          <Shortcut label="Recycle Bin"><BinIcon /></Shortcut>
        </div>
        <BackWindow />
        <ExplorerWindow />
        <svg viewBox="0 0 19 31" className="absolute top-[354px] left-[937px] h-[31px] w-[19px]" aria-hidden="true">
          <path d="M.5.5v23l5.500-5 5.500 11.500 3-1.500L9.500 17.500h8z" fill="#fff" stroke="#000" />
        </svg>
      </div>
      <Taskbar />
    </div>
  );
}
